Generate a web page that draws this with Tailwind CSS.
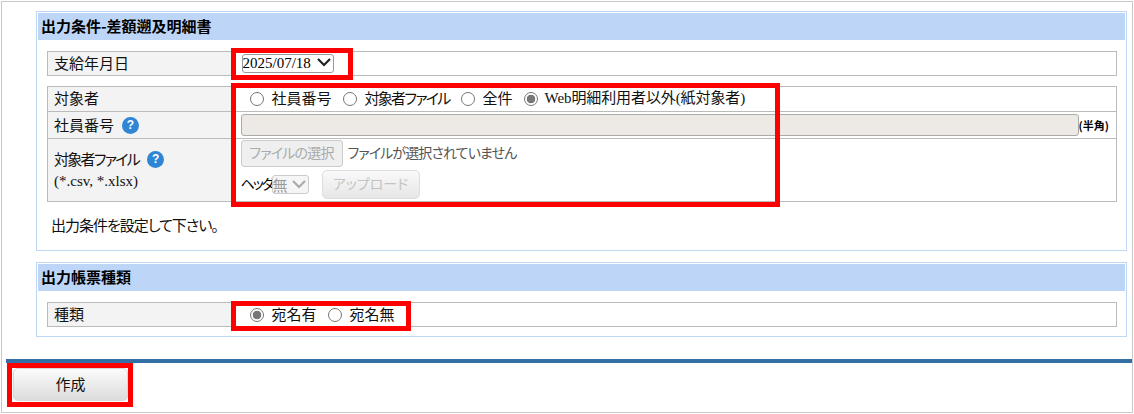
<!DOCTYPE html>
<html lang="ja">
<head>
  <meta charset="UTF-8" />
  <title>出力条件-差額遡及明細書</title>
  <script src="https://cdn.jsdelivr.net/npm/@tailwindcss/browser@4"></script>
</head>
<body class="bg-white text-[15px] text-[#111] [font-feature-settings:'palt'] font-['Noto_Sans_CJK_JP',sans-serif]">
  <div class="relative w-[1134px] h-[414px] overflow-hidden">
    <div class="m-[1px] h-[412px] border border-[#c8c8c8] box-border">

      <!-- 出力条件 -->
      <div class="ml-[34px] mt-[9px] w-[1091px] h-[240px] border border-[#bfd6f4] p-px">
        <h2 class="h-[27px] pl-[3px] bg-[#bdd6f7] text-[15px] leading-[26px] font-bold text-black">出力条件-差額遡及明細書</h2>

        <table class="ml-[9px] mt-[11px] w-[1070px] h-[25px] border border-[#bbb] border-collapse table-fixed">
          <tr>
            <th class="w-[185px] pl-[6px] bg-[#f3f3f3] text-left font-normal">支給年月日</th>
            <td class="pl-[9px] bg-white">
              <div class="relative w-[92px]">
                <select class="block w-[92px] h-[19px] appearance-none border border-[#999] rounded-[3px] text-[15px] leading-[17px] text-black bg-white font-['Liberation_Serif',serif]">
                  <option>2025/07/18</option>
                </select>
                <svg class="absolute left-[75px] top-[4px] w-[14px] h-[9px] pointer-events-none" viewBox="0 0 14 9" fill="none" stroke="#222" stroke-width="2.2">
                  <path d="M1 1l6 6 6-6" />
                </svg>
              </div>
            </td>
          </tr>
        </table>

        <table class="ml-[9px] mt-[10px] w-[1070px] h-[116px] border border-[#bbb] border-collapse table-fixed">
          <tr class="h-[24px] border-b border-[#bbb]">
            <th class="w-[185px] pl-[6px] pb-[2px] bg-[#f3f3f3] text-left font-normal leading-[20px]">対象者</th>
            <td class="pl-[17px]">
              <div class="flex items-center h-[24px] leading-[20px]">
                <input type="radio" disabled name="target" class="appearance-none w-[14px] h-[14px] rounded-full border border-[#767676] bg-white" />
                <span class="ml-[8px] -mt-[2px]">社員番号</span>
                <input type="radio" disabled name="target" class="appearance-none w-[14px] h-[14px] rounded-full border border-[#767676] bg-white ml-[11px]" />
                <span class="ml-[8px] -mt-[2px] tracking-[-1.7px]">対象者ファイル</span>
                <input type="radio" disabled name="target" class="appearance-none w-[14px] h-[14px] rounded-full border border-[#767676] bg-white ml-[11px]" />
                <span class="ml-[8px] -mt-[2px]">全件</span>
                <input type="radio" disabled checked name="target" class="appearance-none w-[14px] h-[14px] rounded-full border border-[#767676] bg-[radial-gradient(circle,#777_0,#777_4px,#fff_4.6px)] ml-[11px]" />
                <span class="ml-[7px] -mt-[2px] tracking-[-0.1px] font-['Liberation_Serif','Noto_Sans_CJK_JP',serif]">Web明細利用者以外(紙対象者)</span>
              </div>
            </td>
          </tr>
          <tr class="h-[27px] border-b border-[#bbb]">
            <th class="pl-[6px] bg-[#f3f3f3] text-left font-normal">
              <div class="flex items-center leading-[20px]">社員番号
                <span class="ml-[8px] w-[17px] h-[17px] rounded-full bg-[#2f86d4] text-white text-[12px] leading-[17px] text-center font-bold font-['Liberation_Sans',sans-serif]">?</span>
              </div>
            </th>
            <td class="pl-[8px]">
              <div class="flex items-center">
                <input type="text" disabled class="w-[838px] h-[22px] rounded-[3px] border border-[#aaa] bg-[#edeae6]" />
                <span class="text-[11px] font-bold text-black whitespace-nowrap">(半角)</span>
              </div>
            </td>
          </tr>
          <tr>
            <th class="pl-[6px] bg-[#f3f3f3] text-left font-normal">
              <div class="flex items-center leading-[20px] -mt-[2px]"><span class="tracking-[-1.7px]">対象者ファイル</span>
                <span class="ml-[8px] w-[17px] h-[17px] rounded-full bg-[#2f86d4] text-white text-[12px] leading-[17px] text-center font-bold font-['Liberation_Sans',sans-serif]">?</span>
              </div>
              <div class="mt-[4px] text-[15px] leading-[16px] font-['Liberation_Serif',serif]">(*.csv, *.xlsx)</div>
            </th>
            <td class="pl-[8px] pt-px align-top">
              <div class="flex items-center h-[27px] text-[#555] text-[14px]">
                <span class="w-[102px] h-[27px] rounded-[3px] border border-[#ccc] bg-[#efefef] text-[#aaa] text-center tracking-[-0.8px] leading-[22px]">ファイルの選択</span>
                <span class="ml-[5px] -mt-[3px] tracking-[-0.9px]">ファイルが選択されていません</span>
              </div>
              <div class="flex items-center mt-[3px] h-[29px]">
                <span class="text-black text-[14px] -mt-[3px] tracking-[-2px] whitespace-nowrap w-[31px]">ヘッダ</span>
                <div class="relative w-[37px]">
                  <select disabled class="block w-[37px] h-[19px] appearance-none border border-[#ccc] rounded-[3px] text-[15px] leading-[17px] text-[#999] bg-[#f5f5f5]">
                    <option>無</option>
                  </select>
                  <svg class="absolute left-[20px] top-[5px] w-[14px] h-[9px] pointer-events-none" viewBox="0 0 14 9" fill="none" stroke="#aaa" stroke-width="2.2">
                    <path d="M1 1l6 6 6-6" />
                  </svg>
                </div>
                <button type="button" disabled class="ml-[13px] pb-[3px] w-[98px] h-[29px] rounded-[5px] border border-[#ddd] bg-gradient-to-b from-[#fafafa] to-[#e6e6e6] text-[14px] text-[#c4c4c4]">アップロード</button>
              </div>
            </td>
          </tr>
        </table>

        <p class="ml-[13px] mt-[12px] text-[15px] tracking-[-1px] leading-[22px]">出力条件を設定して下さい。</p>
      </div>

      <!-- 出力帳票種類 -->
      <div class="ml-[34px] mt-[11px] w-[1091px] h-[75px] border border-[#bfd6f4] p-px">
        <h2 class="h-[27px] pl-[3px] bg-[#bdd6f7] text-[15px] leading-[26px] font-bold text-black">出力帳票種類</h2>
        <table class="ml-[9px] mt-[11px] w-[1070px] h-[25px] border border-[#bbb] border-collapse table-fixed">
          <tr>
            <th class="w-[185px] pl-[6px] bg-[#f3f3f3] text-left font-normal">種類</th>
            <td class="pl-[17px]">
              <div class="flex items-center">
                <input type="radio" disabled checked name="kind" class="appearance-none w-[14px] h-[14px] rounded-full border border-[#767676] bg-[radial-gradient(circle,#777_0,#777_4px,#fff_4.6px)]" />
                <span class="ml-[8px]">宛名有</span>
                <input type="radio" disabled name="kind" class="appearance-none w-[14px] h-[14px] rounded-full border border-[#767676] bg-white ml-[11px]" />
                <span class="ml-[8px]">宛名無</span>
              </div>
            </td>
          </tr>
        </table>
      </div>

      <!-- フッター -->
      <div class="ml-[4px] mt-[22px] h-[4px] bg-[#336fa4]"></div>
      <button type="button" class="block ml-[11px] mt-[5px] w-[115px] h-[33px] rounded-[5px] border border-[#d8d8d8] bg-gradient-to-b from-[#fbfbfb] to-[#dcdcdc] text-[15px] text-[#111]">作成</button>
    </div>

    <!-- 赤枠の注釈 -->
    <div class="absolute left-[231px] top-[48px] w-[122px] h-[32px] border-[5px] border-[#f00]"></div>
    <div class="absolute left-[231px] top-[83px] w-[549px] h-[124px] border-[5px] border-[#f00]"></div>
    <div class="absolute left-[231px] top-[301px] w-[180px] h-[30px] border-[5px] border-[#f00]"></div>
    <div class="absolute left-[7px] top-[363px] w-[126px] h-[44px] border-[5px] border-[#f00]"></div>
  </div>
</body>
</html>
